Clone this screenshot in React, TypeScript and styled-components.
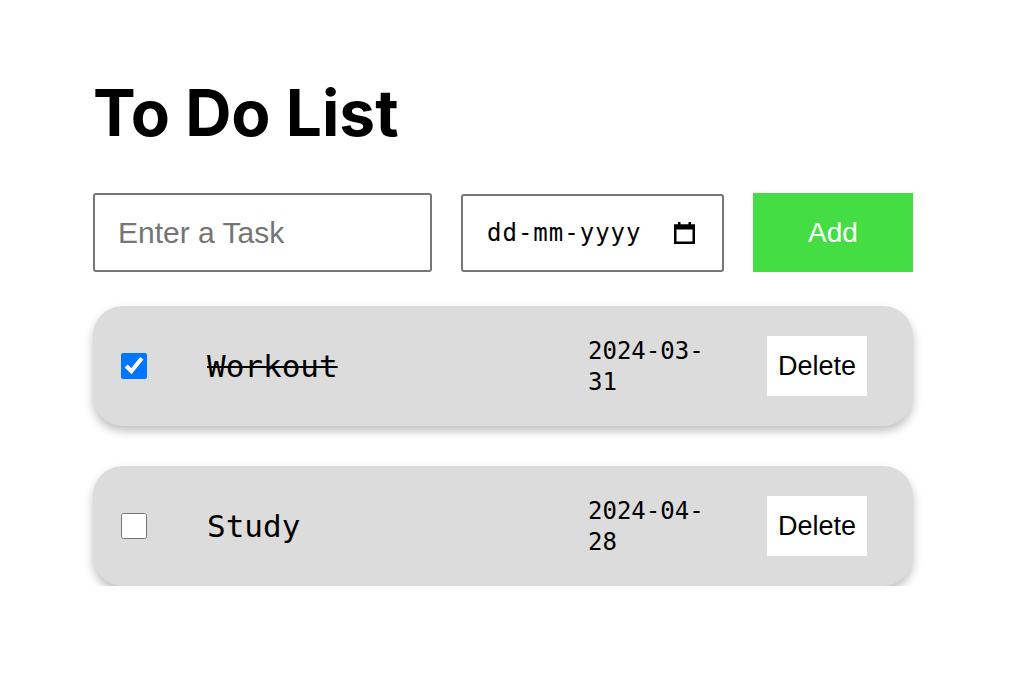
import React, { useState } from "react";
import styled, { createGlobalStyle } from "styled-components";

const GlobalStyle = createGlobalStyle`
  html, body { margin: 0; padding: 0; background: #ffffff; }
  body { font-family: "Liberation Sans", Arial, sans-serif; }
`;

const Page = styled.main`
  width: 820px;
  padding: 74px 0 0 93px;
`;

const Title = styled.h1`
  margin: 0 0 42px 0;
  font-family: Inter, "Liberation Sans", sans-serif;
  font-weight: 700;
  font-size: 64px;
  line-height: 77px;
  color: #000;
`;

const Form = styled.div`
  display: grid;
  grid-template-columns: 339px 263px 160px;
  column-gap: 29px;
  align-items: center;
  margin-bottom: 34px;
`;

const TaskInput = styled.input`
  box-sizing: border-box;
  height: 79px;
  border: 2px solid #767676;
  border-radius: 3px;
  padding: 0 23px;
  font-family: "Liberation Sans", Arial, sans-serif;
  font-size: 30px;
  color: #000;
  outline: none;
  &::placeholder { color: #757575; }
`;

const DateBox = styled.div`
  box-sizing: border-box;
  height: 78px;
  border: 2px solid #767676;
  border-radius: 3px;
  padding: 0 27px 0 24px;
  display: flex;
  align-items: center;
  justify-content: space-between;
  font-family: "DejaVu Sans Mono", "Liberation Mono", monospace;
  font-size: 24px;
  color: #000;
`;

const DateText = styled.span`
  letter-spacing: 1px;
`;

const AddButton = styled.button`
  height: 79px;
  border: none;
  background: #44dd44;
  color: #fff;
  font-family: "Liberation Sans", Arial, sans-serif;
  font-size: 28px;
  cursor: pointer;
`;

const List = styled.ul`
  list-style: none;
  margin: 0;
  padding: 0;
  display: flex;
  flex-direction: column;
  gap: 40px;
`;

const Item = styled.li`
  box-sizing: border-box;
  height: 120px;
  background: #dcdcdc;
  border-radius: 30px;
  box-shadow: 0 5px 10px rgba(0, 0, 0, 0.25);
  display: grid;
  grid-template-columns: 26px 1fr 179px 100px;
  align-items: center;
  padding: 0 46px 0 28px;
`;

const Check = styled.input`
  width: 26px;
  height: 26px;
  margin: 0;
  accent-color: #0075ff;
`;

const TaskName = styled.span<{ $done: boolean }>`
  margin-left: 60px;
  font-family: "DejaVu Sans Mono", "Liberation Mono", monospace;
  font-size: 31px;
  color: #000;
  text-decoration: ${(p) => (p.$done ? "line-through" : "none")};
  text-decoration-thickness: 2px;
`;

const DueDate = styled.span`
  width: 130px;
  font-family: "DejaVu Sans Mono", "Liberation Mono", monospace;
  font-size: 24px;
  line-height: 31px;
  color: #000;
  padding-top: 2px;
`;

const DeleteButton = styled.button`
  width: 100px;
  height: 60px;
  border: none;
  background: #fff;
  color: #000;
  font-family: "Liberation Sans", Arial, sans-serif;
  font-size: 27px;
  padding: 0;
  cursor: pointer;
`;

const CalendarIcon = () => (
  <svg width="21" height="22" viewBox="0 0 21 22" aria-hidden="true">
    <rect x="1.25" y="3.75" width="18.5" height="17" fill="none" stroke="#000" strokeWidth="2.5" />
    <rect x="0" y="2.5" width="21" height="5" fill="#000" />
    <rect x="4" y="0" width="2.5" height="4" fill="#000" />
    <rect x="14.5" y="0" width="2.5" height="4" fill="#000" />
  </svg>
);

type Task = { id: number; name: string; date: string; done: boolean };

export default function App() {
  const [tasks, setTasks] = useState<Task[]>([
    { id: 1, name: "Workout", date: "2024-03-31", done: true },
    { id: 2, name: "Study", date: "2024-04-28", done: false },
  ]);

  const toggle = (id: number) =>
    setTasks((t) => t.map((x) => (x.id === id ? { ...x, done: !x.done } : x)));
  const remove = (id: number) => setTasks((t) => t.filter((x) => x.id !== id));

  return (
    <>
      <GlobalStyle />
      <Page>
        <Title>To Do List</Title>
        <Form>
          <TaskInput placeholder="Enter a Task" />
          <DateBox>
            <DateText>dd-mm-yyyy</DateText>
            <CalendarIcon />
          </DateBox>
          <AddButton>Add</AddButton>
        </Form>
        <List>
          {tasks.map((t) => (
            <Item key={t.id}>
              <Check type="checkbox" checked={t.done} onChange={() => toggle(t.id)} />
              <TaskName $done={t.done}>{t.name}</TaskName>
              <DueDate>{t.date.slice(0, 8)}<br />{t.date.slice(8)}</DueDate>
              <DeleteButton onClick={() => remove(t.id)}>Delete</DeleteButton>
            </Item>
          ))}
        </List>
      </Page>
    </>
  );
}
